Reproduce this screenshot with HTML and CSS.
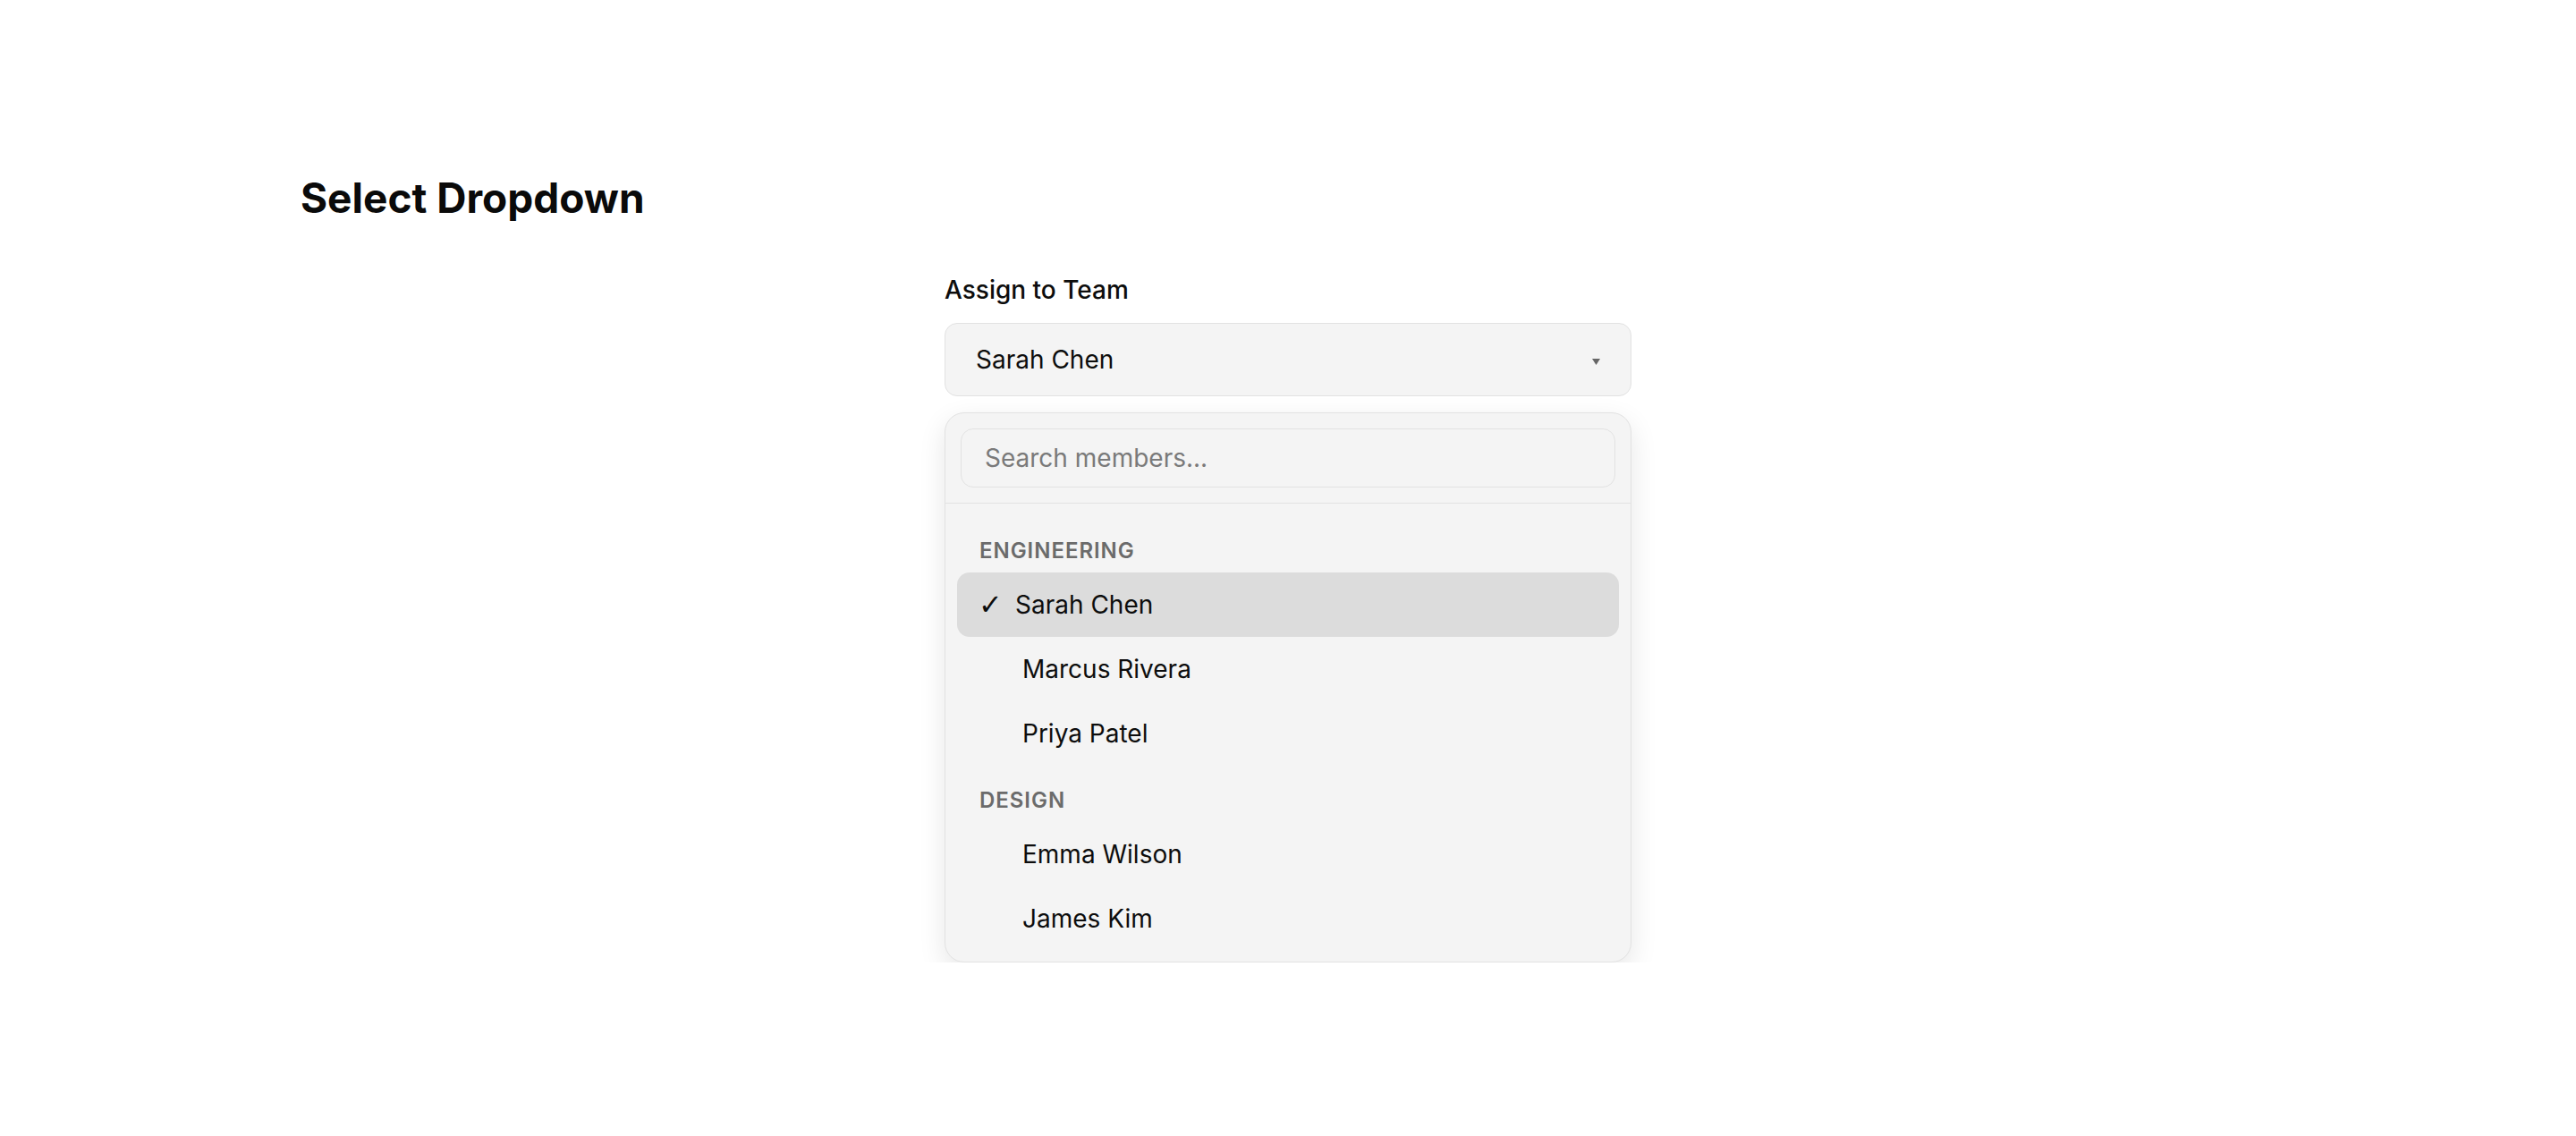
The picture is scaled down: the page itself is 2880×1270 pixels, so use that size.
FILE: index.html
```html
<!DOCTYPE html>
<html lang="en">
<head>
<meta charset="utf-8">
<title>Select Dropdown</title>
<link rel="stylesheet" href="styles.css">
</head>
<body>
<main class="page">
  <h1 class="title">Select Dropdown</h1>
  <div class="field">
    <label class="field-label">Assign to Team</label>
    <div class="select">
      <span class="select-value">Sarah Chen</span>
      <svg class="caret" width="9" height="7" viewBox="0 0 9 7"><polygon points="0,0 9,0 4.5,7" fill="#666"/></svg>
    </div>
    <div class="panel">
      <div class="search-area">
        <input class="search" type="text" placeholder="Search members...">
      </div>
      <div class="list">
        <div class="group-label">Engineering</div>
        <div class="option selected"><span class="check">✓</span>Sarah Chen</div>
        <div class="option">Marcus Rivera</div>
        <div class="option">Priya Patel</div>
        <div class="group-label">Design</div>
        <div class="option">Emma Wilson</div>
        <div class="option">James Kim</div>
      </div>
    </div>
  </div>
</main>
</body>
</html>
```

FILE: styles.css
```css
* { box-sizing: border-box; }

html, body {
  margin: 0;
  background: #ffffff;
}

body {
  font-family: Inter, "Noto Sans", "Liberation Sans", sans-serif;
  color: #0d0d0d;
}

.page {
  padding: 194px 336px 0;
}

.title {
  margin: 0;
  font-size: 46px;
  line-height: 55px;
  font-weight: 700;
  color: #0a0a0a;
}

.field {
  width: 768px;
  margin: 58px auto 0;
}

.field-label {
  display: block;
  font-size: 28px;
  line-height: 34px;
  font-weight: 500;
  color: #0d0d0d;
  margin-bottom: 20px;
}

.select {
  height: 82px;
  border: 1px solid #e2e2e2;
  border-radius: 14px;
  background: #f4f4f4;
  padding: 0 34px;
  display: flex;
  align-items: center;
  justify-content: space-between;
  font-size: 28px;
  line-height: 34px;
  color: #0d0d0d;
}

.caret {
  display: block;
  margin-top: 4px;
}

.panel {
  margin-top: 18px;
  border: 1px solid #e2e2e2;
  border-radius: 22px;
  background: #f4f4f4;
  box-shadow: 0 10px 30px rgba(0, 0, 0, 0.10);
  overflow: hidden;
}

.search-area {
  padding: 17px;
  border-bottom: 1px solid #e2e2e2;
}

.search {
  display: block;
  width: 100%;
  height: 66px;
  border: 1px solid #e2e2e2;
  border-radius: 14px;
  background: #f4f4f4;
  padding: 0 26px;
  font-family: inherit;
  font-size: 28px;
  color: #0d0d0d;
  outline: none;
}

.search::placeholder {
  color: #7a7a7a;
}

.list {
  padding: 14px 13px 12px;
}

.group-label {
  padding: 24px 25px 10px;
  font-size: 24px;
  line-height: 29px;
  font-weight: 600;
  letter-spacing: 0.04em;
  text-transform: uppercase;
  color: #6b6b6b;
}

.option {
  display: flex;
  align-items: center;
  height: 72px;
  padding: 18px 25px 18px 73px;
  font-size: 28px;
  line-height: 36px;
  color: #0d0d0d;
  border-radius: 14px;
}

.option.selected {
  background: #dcdcdc;
  padding-left: 24px;
}

.check {
  display: inline-block;
  width: 41px;
  font-family: "DejaVu Sans", sans-serif;
  font-size: 32px;
  line-height: 36px;
}
```
